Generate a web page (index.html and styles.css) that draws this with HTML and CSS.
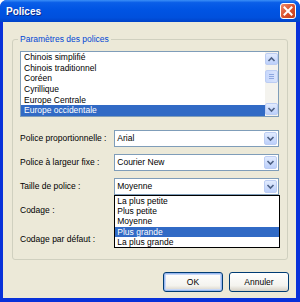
FILE: index.html
```html
<!DOCTYPE html>
<html lang="fr">
<head>
    <meta charset="UTF-8">
    <title>Polices</title>
    <link rel="stylesheet" href="styles.css">
</head>
<body>
    <div class="window">
        <div class="titlebar">
            <span class="title">Polices</span>
            <span class="close">
                <svg width="16" height="16" viewBox="0 0 16 16"><path d="M4.5 4.5 L11.5 11.5 M11.5 4.5 L4.5 11.5" stroke="#fff" stroke-width="2" stroke-linecap="square"/></svg>
            </span>
        </div>
        <div class="frame">
            <div class="group">
                <span class="legend">Paramètres des polices</span>
                <div class="listbox">
                    <div class="items">
                        <div class="item">Chinois simplifié</div>
                        <div class="item">Chinois traditionnel</div>
                        <div class="item">Coréen</div>
                        <div class="item">Cyrillique</div>
                        <div class="item">Europe Centrale</div>
                        <div class="item selected">Europe occidentale</div>
                    </div>
                    <div class="scroll">
                        <span class="sbtn"><svg width="11" height="11" viewBox="0 0 11 11"><path d="M2.5 7 L5.5 4 L8.5 7" fill="none" stroke="#4d6185" stroke-width="1.6"/></svg></span>
                        <div class="track"><span class="thumb"><i></i><i></i><i></i></span></div>
                        <span class="sbtn"><svg width="11" height="11" viewBox="0 0 11 11"><path d="M2.5 4 L5.5 7 L8.5 4" fill="none" stroke="#4d6185" stroke-width="1.6"/></svg></span>
                    </div>
                </div>

                <div class="rows">
                    <div class="row">
                        <label>Police proportionnelle :</label>
                        <div class="combo"><span class="value">Arial</span><span class="drop"><svg width="11" height="11" viewBox="0 0 11 11"><path d="M2.5 4 L5.5 7 L8.5 4" fill="none" stroke="#4d6185" stroke-width="1.6"/></svg></span></div>
                    </div>
                    <div class="row">
                        <label>Police à largeur fixe :</label>
                        <div class="combo"><span class="value">Courier New</span><span class="drop"><svg width="11" height="11" viewBox="0 0 11 11"><path d="M2.5 4 L5.5 7 L8.5 4" fill="none" stroke="#4d6185" stroke-width="1.6"/></svg></span></div>
                    </div>
                    <div class="row">
                        <label>Taille de police :</label>
                        <div class="combo open"><span class="value">Moyenne</span><span class="drop"><svg width="11" height="11" viewBox="0 0 11 11"><path d="M2.5 4 L5.5 7 L8.5 4" fill="none" stroke="#4d6185" stroke-width="1.6"/></svg></span>
                            <div class="dropdown">
                                <div class="opt">La plus petite</div>
                                <div class="opt">Plus petite</div>
                                <div class="opt">Moyenne</div>
                                <div class="opt selected">Plus grande</div>
                                <div class="opt">La plus grande</div>
                            </div>
                        </div>
                    </div>
                    <div class="row">
                        <label>Codage :</label>
                        <div class="combo"></div>
                    </div>
                    <div class="row last">
                        <label>Codage par défaut :</label>
                        <div class="combo"></div>
                    </div>
                </div>
            </div>

            <div class="buttons">
                <button class="default">OK</button>
                <button>Annuler</button>
            </div>
        </div>

        <svg class="cursor" width="12" height="19" viewBox="0 0 12 19"><path d="M0.5 0.5 L0.5 15.5 L4 12 L6.5 17.8 L8.6 16.9 L6.2 11.3 L11 11.3 Z" fill="#fff" stroke="#000" stroke-width="1"/></svg>
    </div>
</body>
</html>
```

FILE: styles.css
```css
* { box-sizing: border-box; }
body { margin: 0; font-family: "Liberation Sans", Arial, sans-serif; font-size: 8.5px; color: #000; }

.window { position: relative; width: 300px; height: 302px; display: flex; flex-direction: column; background: #0831d9; border-radius: 7px 7px 0 0; overflow: hidden; }

.titlebar { height: 22px; display: flex; align-items: center; padding-left: 6px; background: linear-gradient(#3b8ff7 0%, #0a5ee8 12%, #0054e3 45%, #0050dd 80%, #0042c8 100%); }
.title { color: #fff; font-weight: bold; font-size: 10px; text-shadow: 1px 1px #0a2a8a; }
.close { margin-left: auto; margin-right: 4px; width: 16px; height: 16px; border: 1px solid #fff; border-radius: 3px; background: linear-gradient(135deg, #f08a6a, #d8502c 55%, #c23f1e); display: flex; align-items: center; justify-content: center; }
.close svg { margin: -1px; }

.frame { flex: 1; margin: 0 4px 4px 3px; background: #ece9d8; padding: 17px 8px 0 9px; display: flex; flex-direction: column; }

.group { position: relative; height: 221px; border: 1px solid #d0d0bf; border-radius: 3px; padding: 11px 8px 0 7px; }
.legend { position: absolute; top: -6px; left: 5px; padding: 0 2px; background: #ece9d8; color: #0046d5; line-height: 11px; }

.listbox { height: 66px; border: 1px solid #7f9db9; background: #fff; display: flex; }
.items { flex: 1; display: flex; flex-direction: column; }
.item { height: 10.67px; line-height: 10.67px; padding-left: 3px; white-space: nowrap; }
.item.selected { background: #316ac5; color: #fff; }

.scroll { width: 13px; display: flex; flex-direction: column; background: #f4f3ee; padding: 1px 0; }
.sbtn { width: 13px; height: 12px; border: 1px solid #bccdf3; border-radius: 2px; background: linear-gradient(#e2ebfe, #bcd0fb); display: flex; align-items: center; justify-content: center; }
.track { flex: 1; padding-top: 5px; }
.thumb { width: 13px; height: 13px; border: 1px solid #bccdf3; border-radius: 2px; background: linear-gradient(90deg, #c8d8fc, #d9e4fd); display: flex; flex-direction: column; align-items: center; justify-content: center; gap: 1px; }
.thumb i { display: block; width: 5px; height: 1px; background: #8ea7e0; }

.rows { margin-top: 9px; display: flex; flex-direction: column; }
.row { height: 24px; display: flex; align-items: center; }
.row.last { margin-top: 5px; }
.row label { width: 95px; white-space: nowrap; }

.combo { position: relative; width: 166px; height: 17px; border: 1px solid #7f9db9; background: #fff; display: flex; align-items: center; }
.combo .value { flex: 1; padding-left: 2px; }
.drop { width: 13px; height: 13px; margin-right: 1px; border: 1px solid #bccdf3; border-radius: 2px; background: linear-gradient(#e2ebfe, #bcd0fb); display: flex; align-items: center; justify-content: center; }

.dropdown { position: absolute; top: 16px; left: -1px; right: -2px; border: 1px solid #000; background: #fff; z-index: 2; }
.opt { height: 10.4px; line-height: 10.4px; padding-left: 2px; white-space: nowrap; }
.opt.selected { background: #316ac5; color: #fff; }

.buttons { display: flex; justify-content: flex-end; gap: 6px; margin-top: 12px; margin-right: -1px; }
.buttons button { width: 60px; height: 20px; font-family: inherit; font-size: 8.5px; color: #000; border: 1px solid #003c74; border-radius: 3px; background: linear-gradient(#ffffff, #f4f3ee 70%, #d6d0c5); padding: 0; }
.buttons button.default { box-shadow: inset 0 0 0 1px #98b8f0, inset 0 0 0 2px #c6d7f7; }

.cursor { position: absolute; left: 197px; top: 227px; }
```
